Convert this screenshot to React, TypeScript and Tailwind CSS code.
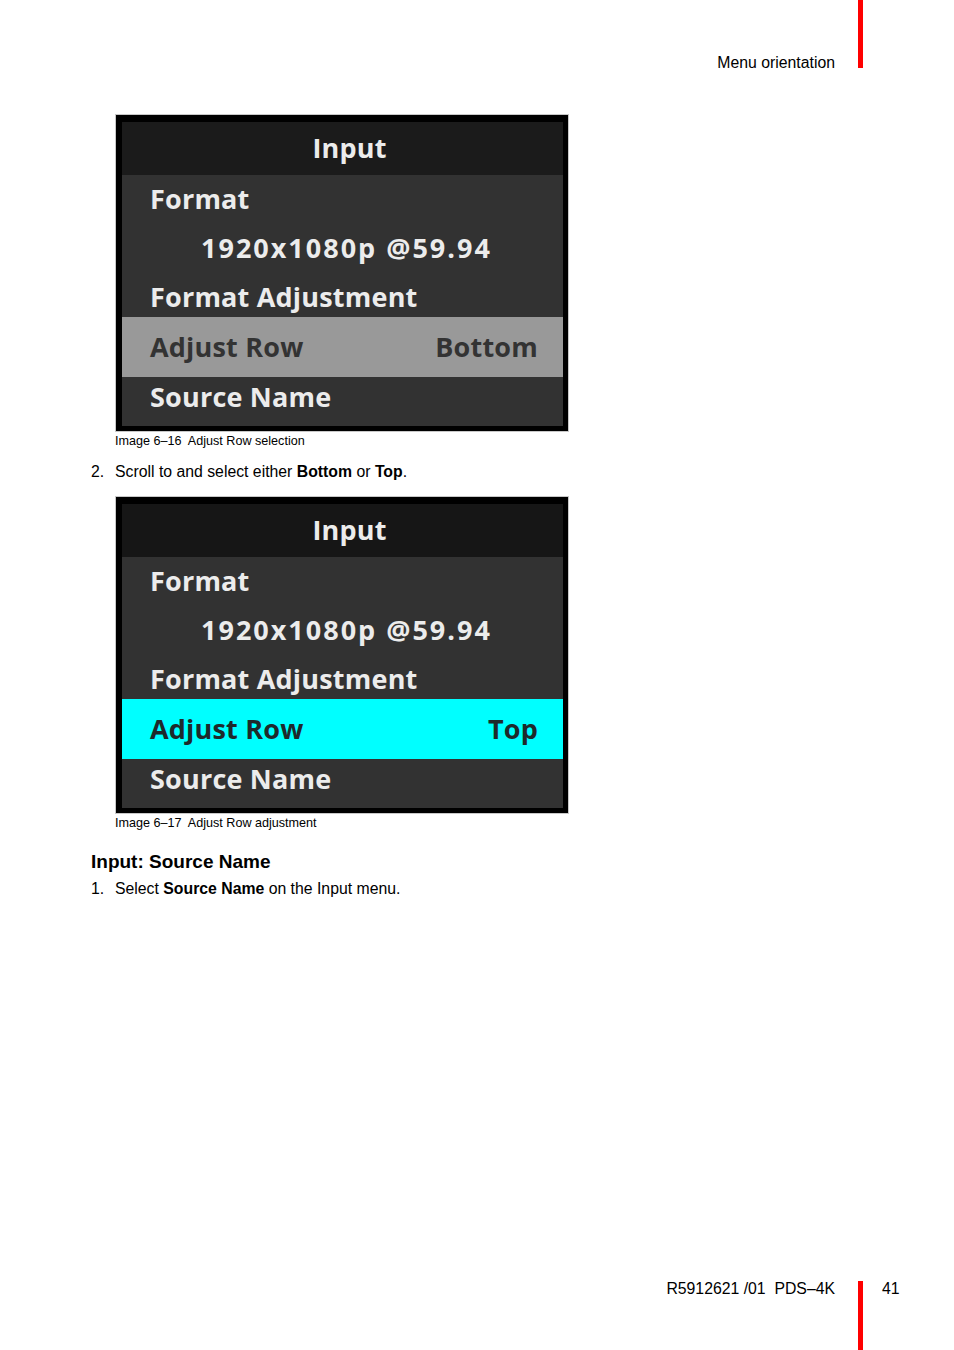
import React from "react";

const menuFont = { fontFamily: '"Open Sans", "Noto Sans", sans-serif' };

function Menu({ value, selected }: { value: string; selected: "gray" | "cyan" }) {
  const selBg = selected === "gray" ? "bg-[#999999] text-[#333333]" : "bg-[#00ffff] text-[#1e2a2b]";
  const titleBg = selected === "gray" ? "bg-[#1b1b1b]" : "bg-[#161616]";
  return (
    <div className="w-[454px] h-[318px] border border-[#c8c8c8] bg-black pt-[7px] pb-[5px] pl-[6px] pr-[5px]">
      <div className="w-full h-full bg-[#323232] flex flex-col font-bold text-[27px] tracking-[0.2px] text-[#ececec]" style={menuFont}>
        <div className={`h-[53px] ${titleBg} flex items-center justify-center pl-[14px] pb-[1px]`}>Input</div>
        <div className="h-[48px] flex items-center pl-[28px]">Format</div>
        <div className="h-[50px] flex items-center pl-[79px] tracking-[2px]">1920x1080p @59.94</div>
        <div className="h-[44px] flex items-center pl-[28px] pt-[4px]">Format Adjustment</div>
        <div className={`h-[60px] flex items-center justify-between pl-[28px] pr-[25px] ${selBg}`}>
          <span>Adjust Row</span>
          <span>{value}</span>
        </div>
        <div className="h-[40px] flex items-center pl-[28px]">Source Name</div>
      </div>
    </div>
  );
}

export default function App() {
  return (
    <div className="w-[954px] min-h-[1350px] bg-white flex flex-col text-black" style={{ fontFamily: '"Liberation Sans", Arial, sans-serif' }}>
      <div className="flex justify-end items-start pr-[91px] h-[68px]">
        <div className="mt-[54px] text-[15.8px] leading-[18px]">Menu orientation</div>
        <div className="ml-[23px] w-[5px] h-[68px] bg-[#ff0000]" />
      </div>

      <div className="ml-[115px] mt-[46px]">
        <Menu value="Bottom" selected="gray" />
        <div className="mt-[2px] text-[12.6px] leading-[14px]">Image 6–16&nbsp; Adjust Row selection</div>
      </div>

      <div className="ml-[91px] mt-[15px] flex text-[15.8px] leading-[18px]">
        <span className="w-[24px]">2.</span>
        <span>
          Scroll to and select either <b>Bottom</b> or <b>Top</b>.
        </span>
      </div>

      <div className="ml-[115px] mt-[15px]">
        <Menu value="Top" selected="cyan" />
        <div className="mt-[2px] text-[12.6px] leading-[14px]">Image 6–17&nbsp; Adjust Row adjustment</div>
      </div>

      <div className="ml-[91px] mt-[21px] text-[19px] leading-[22px] font-bold">Input: Source Name</div>
      <div className="ml-[91px] mt-[7px] flex text-[15.8px] leading-[18px]">
        <span className="w-[24px]">1.</span>
        <span>
          Select <b>Source Name</b> on the Input menu.
        </span>
      </div>

      <div className="mt-auto flex items-start">
        <div className="w-[835px] flex justify-end mt-[-1px] text-[15.8px] leading-[18px] whitespace-pre">R5912621 /01  PDS–4K</div>
        <div className="ml-[23px] w-[5px] h-[69px] bg-[#ff0000]" />
        <div className="ml-[19px] mt-[-1px] text-[15.8px] leading-[18px]">41</div>
      </div>
    </div>
  );
}
